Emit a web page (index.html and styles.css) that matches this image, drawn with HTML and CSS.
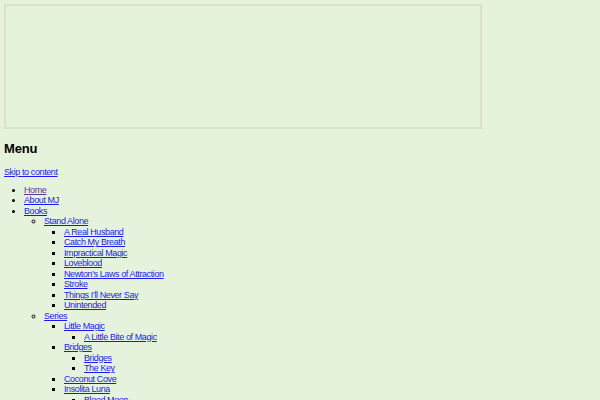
FILE: index.html
```html
<!DOCTYPE html>
<html lang="en">
<head>
<meta charset="utf-8">
<title>MJ</title>
<link rel="stylesheet" href="styles.css">
</head>
<body>
<div class="banner"></div>
<h2 class="menu-title">Menu</h2>
<a class="skip" href="#content">Skip to content</a>
<ul class="nav">
  <li><a class="seen" href="#">Home</a></li>
  <li><a href="#">About MJ</a></li>
  <li><a href="#">Books</a>
    <ul>
      <li><a href="#">Stand Alone</a>
        <ul>
          <li><a href="#">A Real Husband</a></li>
          <li><a href="#">Catch My Breath</a></li>
          <li><a href="#">Impractical Magic</a></li>
          <li><a href="#">Loveblood</a></li>
          <li><a href="#">Newton’s Laws of Attraction</a></li>
          <li><a href="#">Stroke</a></li>
          <li><a href="#">Things I’ll Never Say</a></li>
          <li><a href="#">Unintended</a></li>
        </ul>
      </li>
      <li><a href="#">Series</a>
        <ul>
          <li><a href="#">Little Magic</a>
            <ul>
              <li><a href="#">A Little Bite of Magic</a></li>
            </ul>
          </li>
          <li><a href="#">Bridges</a>
            <ul>
              <li><a href="#">Bridges</a></li>
              <li><a href="#">The Key</a></li>
            </ul>
          </li>
          <li><a href="#">Coconut Cove</a></li>
          <li><a href="#">Insolita Luna</a>
            <ul>
              <li><a href="#">Blood Moon</a></li>
            </ul>
          </li>
        </ul>
      </li>
    </ul>
  </li>
</ul>
</body>
</html>
```

FILE: styles.css
```css
html, body {
  background: #e6f3dc;
}

body {
  margin: 0;
  padding: 4px;
  font-family: "Liberation Sans", Arial, sans-serif;
  font-size: 9px;
  line-height: 10.5px;
  letter-spacing: -0.4px;
  color: #000;
}

/* empty header frame */
.banner {
  width: 478px;
  height: 125px;
  box-sizing: border-box;
  border: 2px solid #d6e2cd;
}

.menu-title {
  margin: 12px 0 0;
  font-size: 13px;
  line-height: 16px;
  font-weight: bold;
  letter-spacing: -0.2px;
}

.skip {
  display: block;
  margin-top: 10px;
}

a {
  color: #1a1aee;
}

a.seen {
  color: #5b3a8e;
}

.nav {
  margin: 7px 0 0;
  padding-left: 20px;
  list-style: disc;
}

.nav ul {
  margin: 0;
  padding-left: 20px;
  list-style: circle;
}

.nav ul ul {
  list-style: square;
}
```
